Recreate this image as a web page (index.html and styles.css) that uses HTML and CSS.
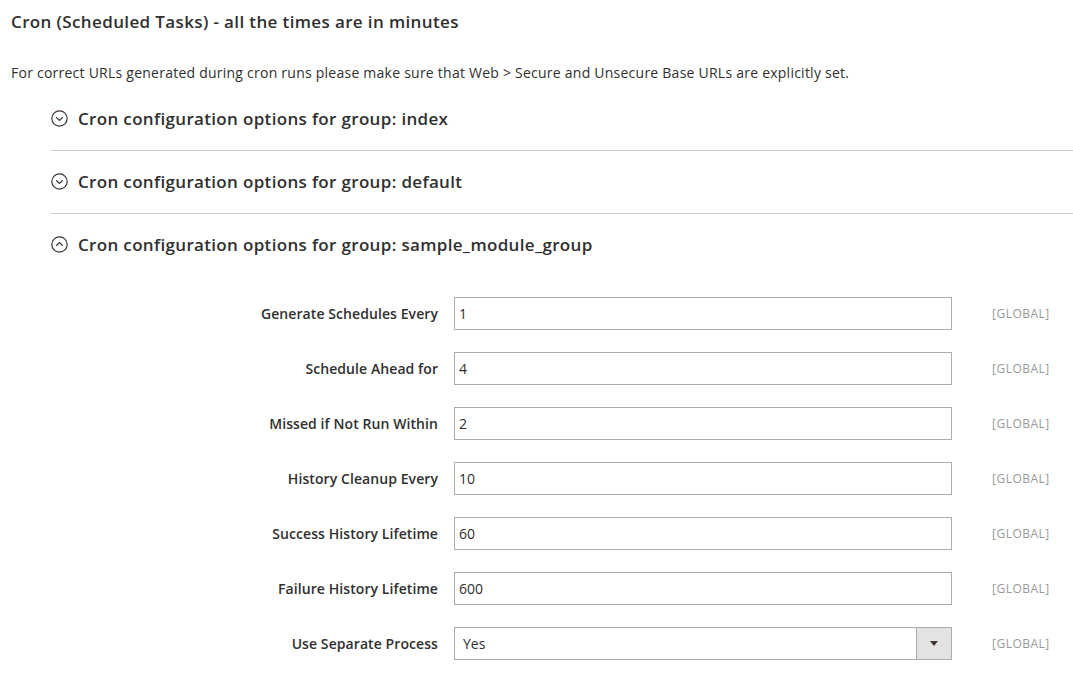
FILE: index.html
```html
<!DOCTYPE html>
<html>
<head>
<meta charset="utf-8">
<link rel="stylesheet" href="styles.css">
</head>
<body>
<div class="page">
  <h2 class="title">Cron (Scheduled Tasks) - all the times are in minutes</h2>
  <p class="note">For correct URLs generated during cron runs please make sure that Web &gt; Secure and Unsecure Base URLs are explicitly set.</p>
  <div class="groups">
    <div class="group">
      <div class="group-head collapsed">
        <svg class="ico" width="17" height="17" viewBox="0 0 17 17"><circle cx="8.5" cy="8.5" r="7.7" fill="none" stroke="#41362f" stroke-width="1.2"/><path d="M5.2 7.2 L8.5 10.4 L11.8 7.2" fill="none" stroke="#41362f" stroke-width="1.2"/></svg>
        <span>Cron configuration options for group: index</span>
      </div>
    </div>
    <div class="group">
      <div class="group-head collapsed">
        <svg class="ico" width="17" height="17" viewBox="0 0 17 17"><circle cx="8.5" cy="8.5" r="7.7" fill="none" stroke="#41362f" stroke-width="1.2"/><path d="M5.2 7.2 L8.5 10.4 L11.8 7.2" fill="none" stroke="#41362f" stroke-width="1.2"/></svg>
        <span>Cron configuration options for group: default</span>
      </div>
    </div>
    <div class="group">
      <div class="group-head">
        <svg class="ico" width="17" height="17" viewBox="0 0 17 17"><circle cx="8.5" cy="8.5" r="7.7" fill="none" stroke="#41362f" stroke-width="1.2"/><path d="M5.2 9.8 L8.5 6.6 L11.8 9.8" fill="none" stroke="#41362f" stroke-width="1.2"/></svg>
        <span>Cron configuration options for group: sample_module_group</span>
      </div>
      <div class="form">
        <label class="lbl">Generate Schedules Every</label>
        <input class="inp" type="text" value="1">
        <span class="scope">[GLOBAL]</span>

        <label class="lbl">Schedule Ahead for</label>
        <input class="inp" type="text" value="4">
        <span class="scope">[GLOBAL]</span>

        <label class="lbl">Missed if Not Run Within</label>
        <input class="inp" type="text" value="2">
        <span class="scope">[GLOBAL]</span>

        <label class="lbl">History Cleanup Every</label>
        <input class="inp" type="text" value="10">
        <span class="scope">[GLOBAL]</span>

        <label class="lbl">Success History Lifetime</label>
        <input class="inp" type="text" value="60">
        <span class="scope">[GLOBAL]</span>

        <label class="lbl">Failure History Lifetime</label>
        <input class="inp" type="text" value="600">
        <span class="scope">[GLOBAL]</span>

        <label class="lbl">Use Separate Process</label>
        <div class="sel">
          <span class="sel-val">Yes</span>
          <span class="sel-btn"><span class="tri"></span></span>
        </div>
        <span class="scope">[GLOBAL]</span>
      </div>
    </div>
  </div>
</div>
</body>
</html>
```
FILE: styles.css
```css
html, body {
  margin: 0;
  padding: 0;
  background: #ffffff;
}
body {
  font-family: "Open Sans", "Liberation Sans", sans-serif;
  color: #303030;
}
.page {
  padding: 12px 0 0 11px;
}
.title {
  margin: 0;
  font-size: 17px;
  line-height: 20px;
  font-weight: 600;
  letter-spacing: 0.37px;
  color: #303030;
}
.note {
  margin: 32px 0 0 0;
  font-size: 14px;
  line-height: 18px;
  letter-spacing: 0.24px;
  color: #303030;
}
.groups {
  margin-top: 6px;
  padding-left: 40px;
}
.group-head {
  box-sizing: border-box;
  display: flex;
  align-items: center;
  gap: 10px;
  height: 62px;
  padding-bottom: 2px;
  font-size: 17px;
  font-weight: 600;
  letter-spacing: 0.33px;
  color: #303030;
}
.group-head.collapsed {
  height: 63px;
  border-bottom: 1px solid #cccccc;
}
.ico {
  flex: none;
}
.form {
  display: grid;
  grid-template-columns: 387px 498px auto;
  column-gap: 16px;
  row-gap: 22px;
  align-items: center;
  margin-top: 21px;
}
.lbl {
  text-align: right;
  font-size: 14px;
  font-weight: 600;
  letter-spacing: 0.08px;
  padding-bottom: 1px;
  color: #303030;
}
.inp {
  box-sizing: border-box;
  height: 33px;
  width: 498px;
  margin: 0;
  border: 1px solid #adadad;
  padding: 0 4px;
  font-family: "Open Sans", "Liberation Sans", sans-serif;
  font-size: 14px;
  color: #303030;
  background: #fff;
  border-radius: 0;
}
.scope {
  margin-left: 24px;
  font-size: 12px;
  color: #999999;
  letter-spacing: 0.5px;
}
.sel {
  box-sizing: border-box;
  height: 33px;
  width: 498px;
  border: 1px solid #adadad;
  display: flex;
  align-items: stretch;
}
.sel-val {
  flex: 1;
  display: flex;
  align-items: center;
  padding-left: 8px;
  font-size: 14px;
  color: #303030;
}
.sel-btn {
  width: 34px;
  border-left: 1px solid #adadad;
  background: #e3e3e3;
  display: flex;
  align-items: center;
  justify-content: center;
}
.tri {
  width: 0;
  height: 0;
  border-left: 4px solid transparent;
  border-right: 4px solid transparent;
  border-top: 5px solid #41362f;
}
```
